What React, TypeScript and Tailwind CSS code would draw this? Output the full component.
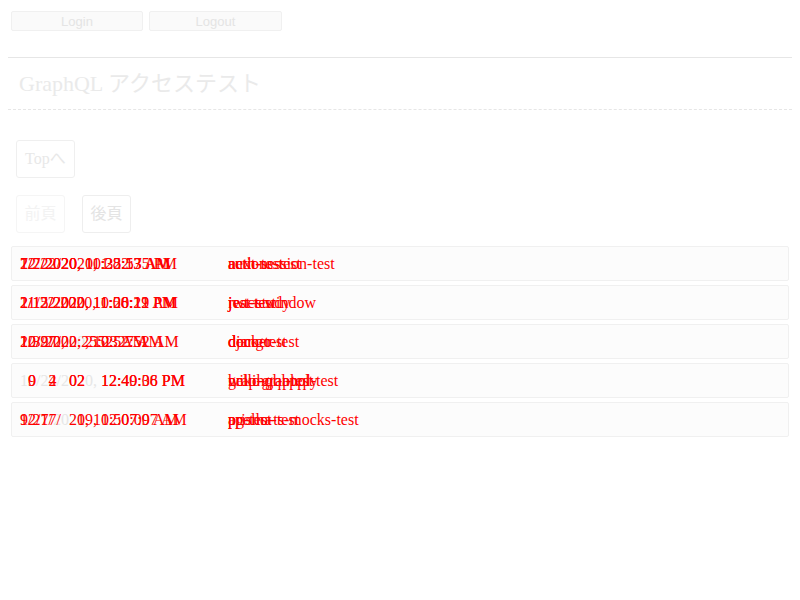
import React from 'react';

type Layer = { text: string; mask?: string };

type Row = {
  base?: string;
  dates: Layer[];
  names: string[];
};

const serif = "font-['Liberation_Serif','Noto_Sans_CJK_JP',serif]";

// mask: "x" = red char, "." = hidden char (lets the grey base show through)
const rows: Row[] = [
  {
    base: '12/22/2020, 1:22:35 PM',
    dates: [
      { text: '12/22/2020, 1:22:35 PM', mask: 'xx.xxxxxxxxxxxxxxxxxxxx' },
      { text: '7/7/2020, 10:35:57 AM' },
      { text: '2/2/2020, 11:28:13 AM' },
    ],
    names: ['actions-test', 'next-session-test', 'auth-test'],
  },
  {
    dates: [
      { text: '2/15/2020, 11:58:19 PM' },
      { text: '11/22/2020, 1:06:22 PM' },
      { text: '2/12/2020, 10:20:11 AM' },
    ],
    names: ['jest-study', 'react-window', 'jwt-test'],
  },
  {
    base: '10/9/2020, 10:52:52 AM',
    dates: [
      { text: '10/9/2020, 10:52:52 AM', mask: 'xxxxxxx..xxxxxxxxxxxxx' },
      { text: '2/3/20, 2:25:23 AM' },
      { text: '12/27/20, 2:52:27 AM' },
    ],
    names: ['docker', 'django-test', 'deno-test'],
  },
  {
    base: '10/22/2020, 12:40:36 PM',
    dates: [
      { text: '10/22/2020, 12:40:36 PM', mask: '.x..x..xx...xxxxxxxxxxx' },
      { text: '19/24/2029, 12:49:08 PM', mask: '.x..x..xx...xxxxxxxxxxx' },
    ],
    names: ['wiki-graphql-test', 'hello-gql-test', 'graphql-apply'],
  },
  {
    base: '9/27/2020, 10:50:09 AM',
    dates: [
      { text: '9/27/2020, 10:50:09 AM', mask: 'xxxxx..xxxxxxxxxxxxxxx' },
      { text: '12/17/2019, 12:07:07 AM', mask: 'xxxxxx..xxxxxxxxxxxxxxx' },
    ],
    names: ['apollo-ts-mocks-test', 'pg-test', 'prisma-test'],
  },
];

function Masked({ text, mask }: Layer) {
  if (!mask) return <span className="col-start-1 row-start-1 whitespace-pre text-[#ff0000]">{text}</span>;
  return (
    <span className="col-start-1 row-start-1 whitespace-pre">
      {text.split('').map((c, i) => (
        <span key={i} className={mask[i] === '.' ? 'text-transparent' : 'text-[#ff0000]'}>
          {c}
        </span>
      ))}
    </span>
  );
}

export default function App() {
  return (
    <div className="min-h-[600px] bg-white pt-[11px]">
      <div className="flex gap-[6px] pl-[11px] font-['Liberation_Sans',sans-serif] text-[13px] text-[#e4e4e4]">
        <button className="w-[132px] h-5 border border-[#f0f0f0] bg-[#fafafa] rounded-[2px]">Login</button>
        <button className="w-[133px] h-5 border border-[#f0f0f0] bg-[#fafafa] rounded-[2px]">Logout</button>
      </div>

      <div className="mx-2 mt-[26px] border-t border-[#e6e6e6]" />
      <div className={`h-[51px] flex items-center px-[19px] text-[22px] text-[#eaeaea] ${serif}`}>
        GraphQL アクセステスト
      </div>
      <div className="mx-2 border-t border-dashed border-[#e6e6e6]" />

      <div className="mt-[30px] ml-4">
        <button className={`h-[38px] px-2 border border-[#efefef] rounded-[3px] bg-white text-base text-[#e8e8e8] ${serif}`}>
          Topへ
        </button>
      </div>

      <div className="mt-[17px] ml-4 flex gap-[17px]">
        <button className={`h-[38px] w-[49px] border border-[#f5f5f5] rounded-[3px] bg-white text-base text-[#f3f3f3] ${serif}`}>
          前頁
        </button>
        <button className={`h-[38px] w-[49px] border border-[#eeeeee] rounded-[3px] bg-white text-base text-[#e4e4e4] ${serif}`}>
          後頁
        </button>
      </div>

      <div className={`mt-[13px] mx-[11px] flex flex-col gap-1 text-base ${serif}`}>
        {rows.map((row, i) => (
          <div key={i} className="h-[35px] flex items-center pl-2 border border-[#f0f0f0] bg-[#fcfcfc] rounded-[2px]">
            <div className="w-[208px] grid">
              {row.base && <span className="col-start-1 row-start-1 whitespace-pre text-[#e6e6e6]">{row.base}</span>}
              {row.dates.map((d, j) => (
                <Masked key={j} {...d} />
              ))}
            </div>
            <div className="grid">
              {row.names.map((n, j) => (
                <span key={j} className="col-start-1 row-start-1 whitespace-pre text-[#ff0000]">
                  {n}
                </span>
              ))}
            </div>
          </div>
        ))}
      </div>
    </div>
  );
}
